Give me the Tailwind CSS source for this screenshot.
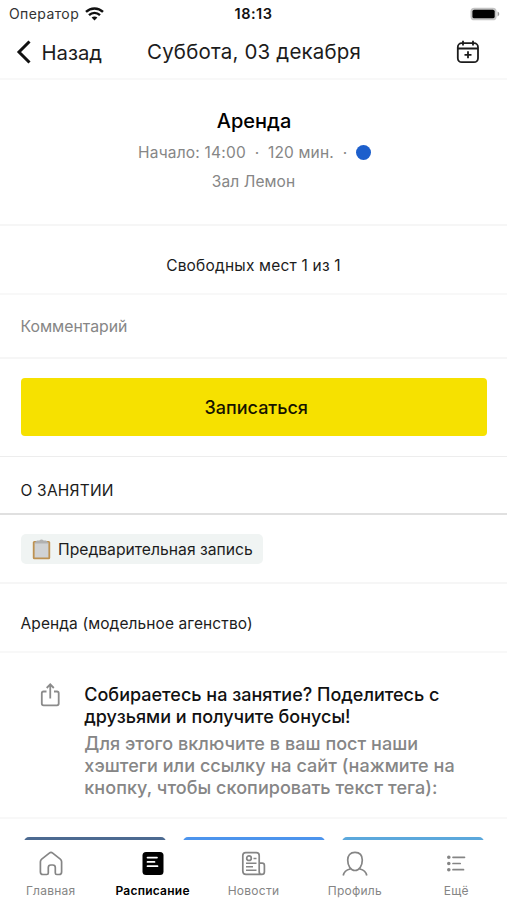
<!DOCTYPE html>
<html lang="ru">
<head>
<meta charset="utf-8">
<title>Аренда</title>
<script src="https://cdn.jsdelivr.net/npm/@tailwindcss/browser@4"></script>
</head>
<body class="bg-white">
<div class="flex h-[900px] w-[507px] flex-col overflow-hidden bg-white font-['Inter','Noto_Sans',sans-serif] text-[#1c1c1c]">
  <header class="h-[80px] shrink-0 border-b-2 border-[#f8f8f8]">
    <div class="grid h-[27px] grid-cols-3 items-center pr-[7px] pl-[9px]">
      <div class="flex items-center gap-[6px] text-[14px] leading-[18px] tracking-[0.4px] text-[#333]">
        <span>Оператор</span>
        <svg class="h-[14px] w-[19px]" viewBox="0 0 19 14" fill="none" stroke="#111" stroke-width="2.4"><path d="M1 4.9C5.8.3 13.2.3 18 4.9M4 8.1c3.2-3 7.800-3 11 0"/><path d="M6.600 10.600c1.700-1.500 4.100-1.500 5.800 0L9.500 13.500z" fill="#111" stroke="none"/></svg>
      </div>
      <div class="pr-[2px] text-center text-[14.500px] leading-[18px] font-semibold tracking-[0.5px] text-[#111]">18:13</div>
      <div class="flex justify-end">
        <svg class="h-[14px] w-[30px]" viewBox="0 0 31 14"><rect x=".5" y=".5" width="27" height="13" rx="4" fill="#c4c4c4"/><rect x="2.500" y="2.500" width="23" height="9" rx="2" fill="#000"/><path d="M28.500 4.500c2.300.8 2.300 4.200 0 5z" fill="#999"/></svg>
      </div>
    </div>
    <div class="flex h-[50px] items-center pr-[27px] pl-[16px]">
      <svg class="h-[24px] w-[16px]" viewBox="0 0 16 24" fill="none" stroke="#111" stroke-width="3"><path d="M13.500 1.500 3 12l10.500 10.500"/></svg>
      <span class="ml-[9.500px] w-[105.500px] pt-[1px] text-[20.300px] leading-[26px]">Назад</span>
      <h1 class="flex-1 text-[20.500px] leading-[26px] tracking-[0.180px] whitespace-nowrap">Суббота, 03 декабря</h1>
      <svg class="h-[24px] w-[24px]" viewBox="0 0 24 24" fill="none" stroke="#1c1c1c" stroke-width="1.800"><rect x="1.800" y="3.200" width="20.200" height="19" rx="4"/><path d="M2 8.500h20M7 .8v4.700M17 .8v4.700M12 11.300v7M8.500 14.800h7"/></svg>
    </div>
  </header>

  <section class="flex h-[146px] shrink-0 flex-col items-center border-b-2 border-[#f6f6f6] pt-[28px]">
    <h2 class="pl-[1px] text-[20px] leading-[27px] font-medium text-black">Аренда</h2>
    <div class="mt-[6px] flex items-center pl-[2px] text-[15.500px] leading-[24px] text-[#868686]">
      <span class="tracking-[0.200px]">Начало: 14:00</span><span class="w-[22px] text-center">·</span><span class="tracking-[0.180px]">120 мин.</span><span class="w-[22px] text-center">·</span><span class="mb-[2px] h-[15px] w-[15px] rounded-full bg-[#1d5fcc]"></span>
    </div>
    <div class="mt-[5px] text-[15.500px] leading-[24px] tracking-[0.080px] text-[#868686]">Зал Лемон</div>
  </section>

  <section class="flex h-[69px] shrink-0 items-center justify-center border-b-2 border-[#f8f8f8] pt-[13px] text-[15.500px] tracking-[0.200px]">Свободных мест 1 из 1</section>
  <section class="flex h-[64px] shrink-0 items-center border-b-2 border-[#f6f6f6] pt-[2px] pl-[20.500px] text-[15.800px] text-[#868686]">Комментарий</section>
  <section class="h-[98px] shrink-0 border-b border-[#ededed] pt-[19px] pr-[20px] pl-[20.500px]">
    <button class="flex h-[58px] w-full items-center justify-center rounded-[4px] bg-[#f6e100] pl-[5px] text-[18px] font-medium text-[#161400]">Записаться</button>
  </section>
  <section class="flex h-[58px] shrink-0 items-center border-b-2 border-[#e0e0e0] pl-[20.500px] pt-[12px] text-[15.500px] tracking-[0.200px]">О ЗАНЯТИИ</section>
  <section class="h-[69px] shrink-0 border-b-2 border-[#f6f6f6] px-[21px] pt-[19px]">
    <div class="flex h-[30px] w-[242px] items-center rounded-[5px] bg-[#f0f4f3] pl-[11px]">
      <svg class="h-[21px] w-[19px]" viewBox="0 0 19 21"><rect x=".8" y="2" width="17.400" height="18.200" rx="1.500" fill="#bd9151"/><rect x="2.600" y="3.500" width="13.800" height="15" fill="#d0d2d4"/><path d="M3 3.200 5 1.600h2.300Q9.500-.6 11.700 1.600H14l2 1.600v1.300H3z" fill="#b1b1b1"/></svg>
      <span class="ml-[7px] pt-[2px] text-[15.700px] leading-[24px] whitespace-nowrap">Предварительная запись</span>
    </div>
  </section>
  <section class="flex h-[69px] shrink-0 items-center border-b-2 border-[#f8f8f8] pl-[20.500px] pt-[12px] text-[15.500px] tracking-[0.100px]">Аренда (модельное агенство)</section>
  <section class="flex h-[166px] shrink-0 border-b-2 border-[#f8f8f8] pl-[40px] pt-[31px]">
    <svg class="-mt-px h-[24px] w-[20px] shrink-0" viewBox="0 0 20 24" fill="none" stroke="#8b8b8b" stroke-width="1.800"><path d="M6.500 8.500H3.500q-1.700 0-1.700 1.700v10.400q0 1.700 1.700 1.700h13.500q1.700 0 1.700-1.700V10.200q0-1.700-1.700-1.700H14M10.250 15.500V1.500M6.700 5l3.550-3.600L13.800 5"/></svg>
    <div class="ml-[24.300px] text-[18px] leading-[22px] font-medium whitespace-nowrap">
      <p class="text-[#111]">Собираетесь на занятие? Поделитесь с<br>друзьями и получите бонусы!</p>
      <p class="mt-[5px] tracking-[0.050px] text-[#868686]">Для этого включите в ваш пост наши<br>хэштеги или ссылку на сайт (нажмите на<br>кнопку, чтобы скопировать текст тега):</p>
    </div>
  </section>
  <section class="flex h-[21px] shrink-0 gap-[17px] overflow-hidden pl-[24px] pt-[18px]">
    <div class="h-[40px] w-[142px] shrink-0 rounded-[5px] bg-[#4c6a91]"></div>
    <div class="h-[40px] w-[142px] shrink-0 rounded-[5px] bg-[#4c94ed]"></div>
    <div class="h-[40px] w-[142px] shrink-0 rounded-[5px] bg-[#5ba8dc]"></div>
  </section>
  <nav class="grid h-[60px] shrink-0 grid-cols-5 bg-white pt-[11px] text-[12px] leading-[16px] tracking-[0.250px] text-[#858585]">
    <a class="flex flex-col items-center gap-[7px]"><svg class="h-[25px] w-[26px]" viewBox="0 0 26 25" fill="none" stroke="#858585" stroke-width="1.700" stroke-linejoin="round"><path d="M2.400 10.800q0-1.700 1.300-2.700l7.600-6q1.700-1.300 3.400 0l7.600 6q1.300 1 1.300 2.700V21q0 2.500-2.500 2.500h-2.300q-1.500 0-1.500-1.500v-5.500q0-2.500-2.500-2.500h-2q-2.500 0-2.500 2.500V22q0 1.500-1.500 1.500H4.900Q2.400 23.500 2.400 21z"/></svg><span>Главная</span></a>
    <a class="flex flex-col items-center gap-[7px] pl-[1px] font-semibold text-black"><svg class="h-[25px] w-[22px]" viewBox="0 0 22 25"><rect x=".5" y="1" width="21" height="23" rx="3.500"/><path d="M5.500 6.600h9.500M5.500 10.900h7M5.500 15.200h10" stroke="#fff" stroke-width="1.700" stroke-linecap="round"/></svg><span>Расписание</span></a>
    <a class="flex flex-col items-center gap-[7px]"><svg class="h-[25px] w-[25px]" viewBox="0 0 25 25" fill="none" stroke="#858585" stroke-width="1.700"><path d="M20.800 23.400H5Q1.800 23.400 1.800 20V4.500q0-2.800 2.800-2.800h10.800q2.800 0 2.800 2.800v16.200q0 2.700 2.600 2.700t2.600-2.700v-6.200q0-2.300-2.300-2.300h-2.600"/><circle cx="8" cy="7.200" r="2.300"/><path d="M12.500 7.500h3M5 12.200h10.500M5 15.700h7M5 19.200h10.500" stroke-width="1.500"/></svg><span>Новости</span></a>
    <a class="flex flex-col items-center gap-[7px]"><svg class="h-[25px] w-[26px]" viewBox="0 0 26 25" fill="none" stroke="#858585" stroke-width="1.700"><path d="M13 1.300c4.800 0 7.300 3.200 7.300 7.800 0 5.900-3.100 10.400-7.300 10.400S5.700 15 5.700 9.100c0-4.600 2.500-7.800 7.300-7.800zM1.200 24.500c.7-3.500 3.300-5.600 7-6.500M24.800 24.500c-.7-3.500-3.300-5.600-7-6.500"/></svg><span>Профиль</span></a>
    <a class="flex flex-col items-center gap-[7px]"><svg class="h-[25px] w-[20px]" viewBox="0 0 20 25" fill="none" stroke="#858585" stroke-width="1.700" stroke-linecap="round"><path d="M7 6.300h11.500M7 12.500h7.200M7 18.700h10.500"/><path d="M2.800 6.300h.01M2.800 12.500h.01M2.800 18.700h.01" stroke-width="3.600"/></svg><span>Ещё</span></a>
  </nav>
</div>
</body>
</html>
